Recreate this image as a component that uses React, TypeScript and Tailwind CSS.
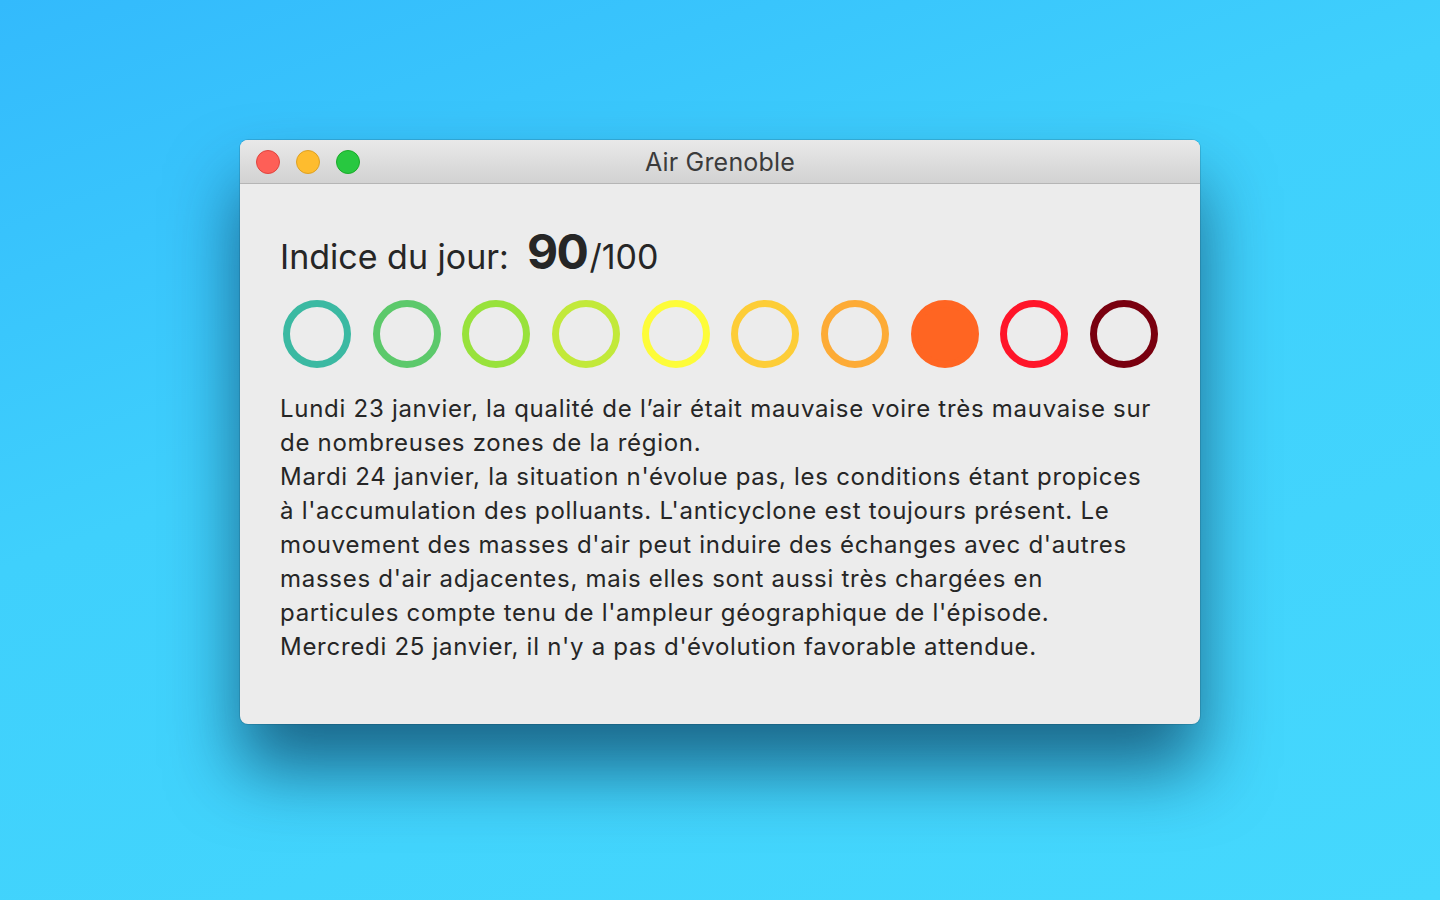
import React from "react";

const circles = [
  { c: "#3bb9a2", filled: false },
  { c: "#5cc96b", filled: false },
  { c: "#98e23b", filled: false },
  { c: "#c2e93a", filled: false },
  { c: "#fdfc39", filled: false },
  { c: "#fdcd37", filled: false },
  { c: "#fdab36", filled: false },
  { c: "#ff6522", filled: true },
  { c: "#ff1529", filled: false },
  { c: "#79000f", filled: false },
];

const lines = [
  "Lundi 23 janvier, la qualité de l\u2019air était mauvaise voire très mauvaise sur",
  "de nombreuses zones de la région.",
  "Mardi 24 janvier, la situation n'évolue pas, les conditions étant propices",
  "à l'accumulation des polluants. L'anticyclone est toujours présent. Le",
  "mouvement des masses d'air peut induire des échanges avec d'autres",
  "masses d'air adjacentes, mais elles sont aussi très chargées en",
  "particules compte tenu de l'ampleur géographique de l'épisode.",
  "Mercredi 25 janvier, il n'y a pas d'évolution favorable attendue.",
];

export default function App() {
  return (
    <div
      className="w-[1440px] h-[900px] overflow-hidden bg-[linear-gradient(160deg,#33bafc_0%,#3fd0fc_40%,#45d8fd_100%)] pt-[140px]"
      style={{ fontFamily: "Inter, 'Noto Sans', sans-serif" }}
    >
      <div className="mx-auto w-[960px] h-[584px] rounded-[8px] bg-[#ececec] overflow-hidden shadow-[0_45px_70px_rgba(0,30,60,0.6),0_0_0_1px_rgba(0,0,0,0.12)] flex flex-col">
        <div className="relative h-[44px] shrink-0 bg-[linear-gradient(#e9e9e9,#d2d2d2)] border-b border-[#b5b5b5] flex items-center justify-center pt-[3px]">
          <div className="absolute left-[16px] top-[10px] flex gap-[16px]">
            <div className="w-[24px] h-[24px] rounded-full bg-[#fe5f57] border border-[#e0443e]" />
            <div className="w-[24px] h-[24px] rounded-full bg-[#febc2e] border border-[#dea123]" />
            <div className="w-[24px] h-[24px] rounded-full bg-[#28c840] border border-[#1aab29]" />
          </div>
          <span className="text-[25px] text-[#3b3b3b] tracking-[0.2px]">Air Grenoble</span>
        </div>
        <div className="px-[40px] pt-[32px] text-[#262626]">
          <div className="flex items-baseline h-[50px]">
            <span className="text-[34px] tracking-[0px]">Indice du jour:</span>
            <span className="text-[48px] font-bold ml-[18px] tracking-[-1.5px]">90</span>
            <span className="text-[34px] tracking-[0px] ml-[2px]">/100</span>
          </div>
          <div className="flex justify-between mt-[34px] w-[875px] ml-[3px]">
            {circles.map((ci, i) => (
              <div
                key={i}
                className="w-[68px] h-[68px] rounded-full border-[7px]"
                style={{ borderColor: ci.c, backgroundColor: ci.filled ? ci.c : "transparent" }}
              />
            ))}
          </div>
          <div className="mt-[24px] text-[24px] leading-[34px] tracking-[0.72px]">
            {lines.map((l, i) => (
              <div key={i} className="whitespace-nowrap">{l}</div>
            ))}
          </div>
        </div>
      </div>
    </div>
  );
}
